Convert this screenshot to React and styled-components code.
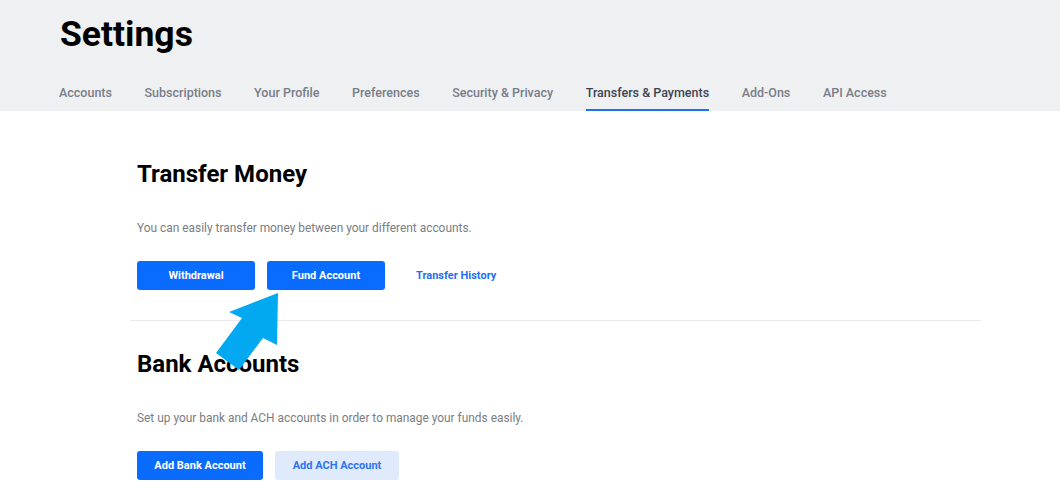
import React from "react";
import styled, { createGlobalStyle } from "styled-components";

const GlobalStyle = createGlobalStyle`
  body {
    margin: 0;
    background: #fff;
    font-family: Roboto, "Liberation Sans", sans-serif;
  }
`;

const Page = styled.div`
  position: relative;
  width: 1060px;
  min-height: 499px;
`;

const Header = styled.header`
  background-color: #eff0f2;
  padding: 13px 60px 0;
`;

const PageTitle = styled.h1`
  margin: 0 0 30px;
  font-size: 35.5px;
  font-weight: 700;
  line-height: 42px;
  color: #000;
`;

const Tabs = styled.nav`
  display: flex;
  gap: 32.6px;
  margin-left: -1px;
`;

const Tab = styled.a`
  display: block;
  padding: 0 0 9px;
  font-size: 12.5px;
  font-weight: 500;
  line-height: 15px;
  color: ${(p) => (p.$active ? "#3d4451" : "#787d88")};
  border-bottom: 2px solid ${(p) => (p.$active ? "#1a73f5" : "transparent")};
  cursor: pointer;
`;

const Main = styled.main`
  margin-left: 130px;
  width: 851px;
`;

const Section = styled.section`
  padding: ${(p) => (p.$first ? "49px" : "29px")} 7px 30px;
  border-bottom: ${(p) => (p.$divider ? "1px solid #e8e9ec" : "none")};
`;

const SectionTitle = styled.h2`
  margin: 0 0 32px;
  font-size: 24px;
  font-weight: 700;
  line-height: 28px;
  color: #000;
`;

const Description = styled.p`
  margin: 0 0 25px;
  font-size: 11.9px;
  line-height: 16px;
  color: #7a7d82;
`;

const Actions = styled.div`
  display: flex;
  align-items: center;
  gap: 12px;
`;

const Button = styled.button`
  height: 29px;
  width: ${(p) => p.$width}px;
  border: none;
  border-radius: 3px;
  background-color: ${(p) => (p.$light ? "#dfebfd" : "#0a6cff")};
  color: ${(p) => (p.$light ? "#2f74ef" : "#fff")};
  font-family: inherit;
  font-size: 11px;
  font-weight: 700;
  cursor: pointer;
`;

const LinkButton = styled.a`
  margin-left: 19px;
  font-size: 11px;
  font-weight: 700;
  color: #1f6ff0;
  cursor: pointer;
`;

const Arrow = styled.svg`
  position: absolute;
  left: 0;
  top: 0;
  pointer-events: none;
`;

const tabs = [
  "Accounts",
  "Subscriptions",
  "Your Profile",
  "Preferences",
  "Security & Privacy",
  "Transfers & Payments",
  "Add-Ons",
  "API Access",
];

export default function App() {
  return (
    <Page>
      <GlobalStyle />
      <Header>
        <PageTitle>Settings</PageTitle>
        <Tabs>
          {tabs.map((t) => (
            <Tab key={t} $active={t === "Transfers & Payments"}>
              {t}
            </Tab>
          ))}
        </Tabs>
      </Header>
      <Main>
        <Section $first $divider>
          <SectionTitle>Transfer Money</SectionTitle>
          <Description>
            You can easily transfer money between your different accounts.
          </Description>
          <Actions>
            <Button $width={118}>Withdrawal</Button>
            <Button $width={118}>Fund Account</Button>
            <LinkButton>Transfer History</LinkButton>
          </Actions>
        </Section>
        <Section>
          <SectionTitle>Bank Accounts</SectionTitle>
          <Description>
            Set up your bank and ACH accounts in order to manage your funds
            easily.
          </Description>
          <Actions>
            <Button $width={126}>Add Bank Account</Button>
            <Button $width={124} $light>
              Add ACH Account
            </Button>
          </Actions>
        </Section>
      </Main>
      <Arrow width="1060" height="499" viewBox="0 0 1060 499">
        <polygon
          points="278,293 229,312 242,318 216,353 239,370 263,338 277,345"
          fill="#02a8f0"
        />
      </Arrow>
    </Page>
  );
}
